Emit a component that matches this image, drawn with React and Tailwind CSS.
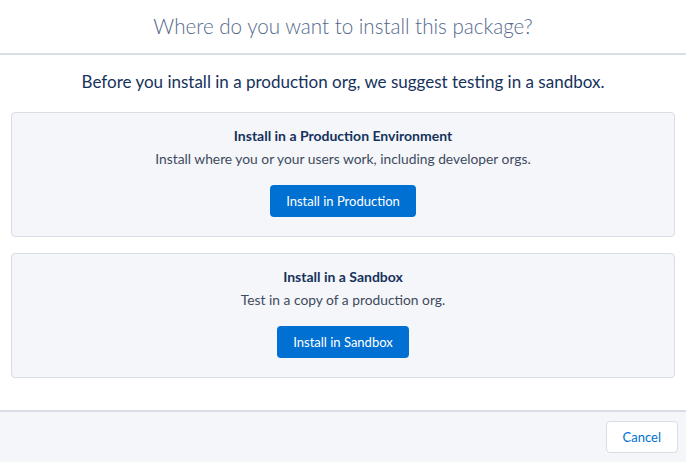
import React from 'react'

const options = [
  {
    title: 'Install in a Production Environment',
    text: 'Install where you or your users work, including developer orgs.',
    button: 'Install in Production',
  },
  {
    title: 'Install in a Sandbox',
    text: 'Test in a copy of a production org.',
    button: 'Install in Sandbox',
  },
]

export default function App() {
  return (
    <div className="w-[686px] h-[462px] flex flex-col bg-white font-['Lato',sans-serif] text-[#16325c]">
      {/* Header */}
      <div className="h-[55px] shrink-0 flex items-center justify-center border-b-2 border-[#d8dde6]">
        <h2 className="text-[20.6px] font-light text-[#54698d] leading-none">Where do you want to install this package?</h2>
      </div>

      {/* Body */}
      <div className="flex-1 px-[11px] pt-[16px]">
        <p className="text-center text-[17px] leading-[22px] text-[#16325c] mb-[19px]">
          Before you install in a production org, we suggest testing in a sandbox.
        </p>
        <div className="flex flex-col gap-[16px]">
          {options.map(o => (
            <div key={o.title} className="h-[125px] bg-[#f4f6f9] border border-[#d8dde6] rounded flex flex-col items-center pt-[13px]">
              <p className="text-[14px] font-bold leading-[20px]">{o.title}</p>
              <p className="text-[13.8px] leading-[20px] mt-[3px] text-[#3e4a5e]">{o.text}</p>
              <button className="mt-[16px] h-[32px] px-4 rounded bg-[#0070d2] text-white text-[13px] leading-none">
                {o.button}
              </button>
            </div>
          ))}
        </div>
      </div>

      {/* Footer */}
      <div className="h-[52px] shrink-0 bg-[#f4f6f9] border-t-2 border-[#d8dde6] flex items-center justify-end px-[8px]">
        <button className="h-[32px] px-4 rounded bg-white border border-[#d8dde6] text-[#0070d2] text-[13px] leading-none">
          Cancel
        </button>
      </div>
    </div>
  )
}
